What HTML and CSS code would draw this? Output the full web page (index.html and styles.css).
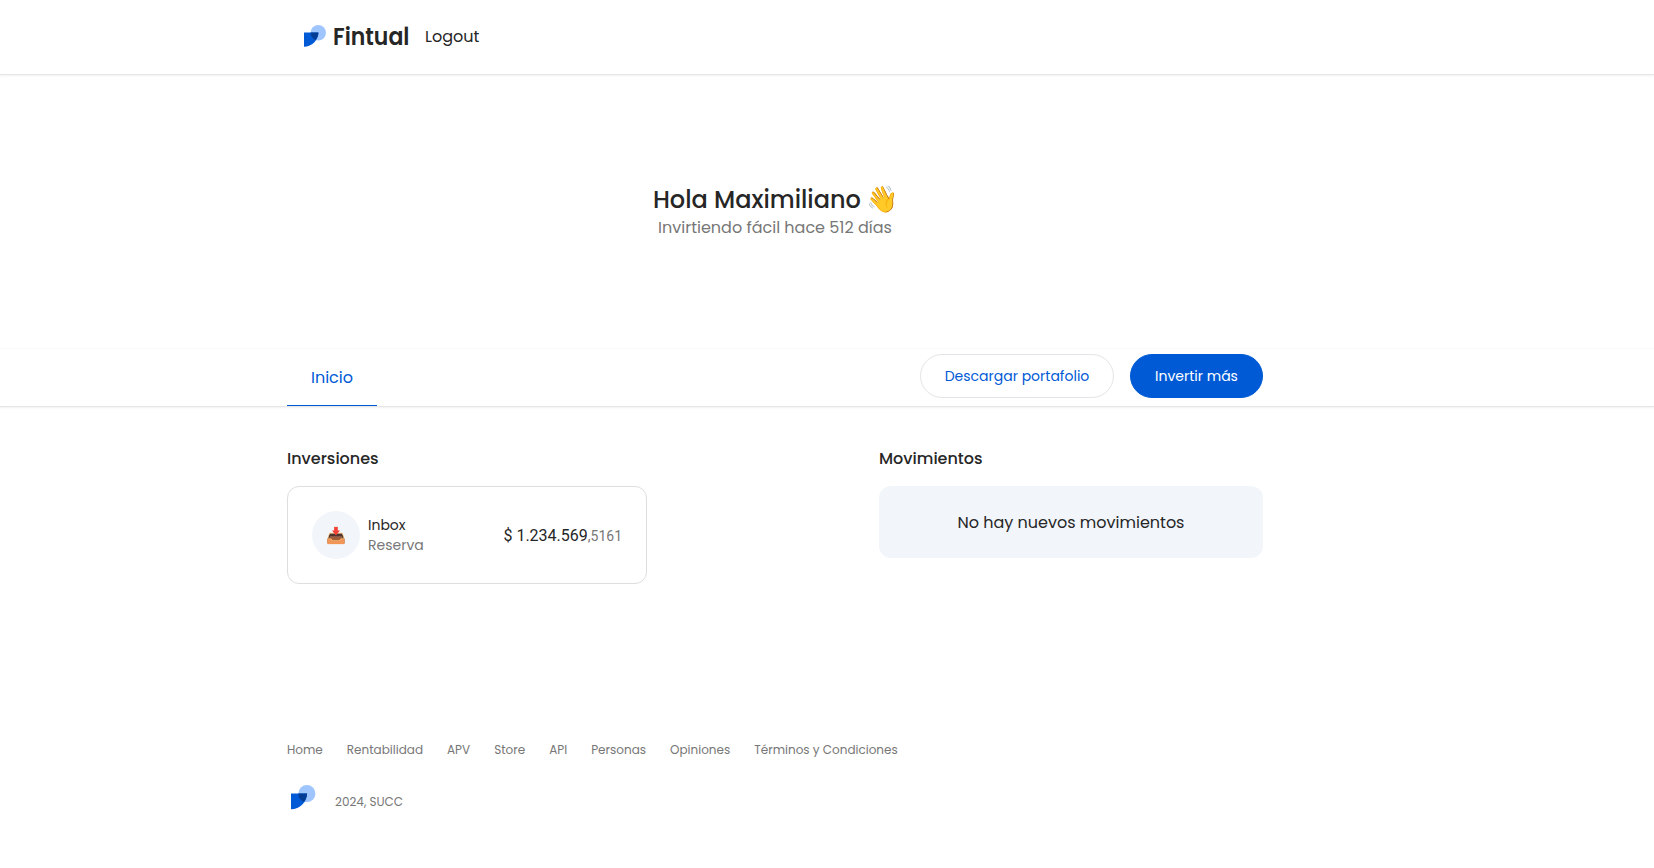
FILE: index.html
```html
<!DOCTYPE html>
<html lang="es">
<head>
<meta charset="utf-8">
<title>Fintual</title>
<link rel="stylesheet" href="styles.css">
</head>
<body>
<header class="header">
  <a class="brand">
    <svg class="brand-mark" viewBox="0 0 25 25"><circle cx="16.2" cy="8.8" r="8.7" fill="#9fc5ff"/><path d="M0 8.6H16.4C16.4 17 9 24.8 0 24.8Z" fill="#005ad6"/><path d="M7.6 8.6H16.4C16.2 12 15.1 14.7 13.3 17C10 16 7.4 13 7.6 8.6Z" fill="#003c94"/></svg>
    <span class="brand-name">Fintual</span>
  </a>
  <a class="logout">Logout</a>
</header>
<section class="hero">
  <h1 class="greeting">Hola Maximiliano <span class="wave">👋</span></h1>
  <p class="since">Invirtiendo fácil hace 512 días</p>
</section>
<nav class="tabs">
  <a class="tab"><span>Inicio</span></a>
  <div class="actions">
    <a class="button button-outline">Descargar portafolio</a>
    <a class="button button-primary">Invertir más</a>
  </div>
</nav>
<main class="content">
  <section class="investments">
    <h2 class="heading">Inversiones</h2>
    <div class="card">
      <span class="card-icon">📥</span>
      <div class="card-text"><span class="card-title">Inbox</span><span class="card-sub">Reserva</span></div>
      <div class="amount">$ 1.234.569<span class="decimals">,5161</span></div>
    </div>
  </section>
  <section class="movements">
    <h2 class="heading">Movimientos</h2>
    <div class="empty">No hay nuevos movimientos</div>
  </section>
</main>
<footer class="footer">
  <div class="links">
    <a>Home</a><a>Rentabilidad</a><a>APV</a><a>Store</a><a>API</a><a>Personas</a><a>Opiniones</a><a>Términos y Condiciones</a>
  </div>
  <div class="legal">
    <svg class="footer-mark" viewBox="0 0 25 25"><circle cx="16.2" cy="8.8" r="8.7" fill="#9fc5ff"/><path d="M0 8.6H16.4C16.4 17 9 24.8 0 24.8Z" fill="#005ad6"/><path d="M7.6 8.6H16.4C16.2 12 15.1 14.7 13.3 17C10 16 7.4 13 7.6 8.6Z" fill="#003c94"/></svg>
    <span class="copyright">2024, SUCC</span>
  </div>
</footer>
</body>
</html>
```
FILE: styles.css
```css
* { box-sizing: border-box; }
body { margin: 0; background: #fff; color: #262626; font-family: Poppins, Inter, "Noto Sans", sans-serif; font-size: 16px; line-height: 24px; white-space: nowrap; }
h1, h2, p { margin: 0; }
.header { height: 75px; padding-left: 304px; display: flex; align-items: center; border-bottom: 1px solid #e6e6e6; box-shadow: 0 1px 2px rgba(0,0,0,.06); }
.brand { display: flex; align-items: center; width: 121px; }
.brand-mark { width: 22px; height: 22px; margin: 0 7px 2px 0; }
.brand-name { font-size: 25px; font-weight: 600; transform: scaleX(.88); transform-origin: left; }
.hero { height: 273px; width: 1550px; padding-top: 108px; text-align: center; }
.greeting { height: 34px; font-size: 24px; font-weight: 500; line-height: 34px; }
.wave { margin: 0 -1px; font-size: 26px; line-height: 1; }
.since { color: #777; line-height: 24px; margin-top: -1px; }
.tabs { height: 59px; padding-left: 287px; display: flex; border-top: 1px solid #fafafa; border-bottom: 1px solid #e6e6e6; box-shadow: 0 1px 2px rgba(0,0,0,.06); }
.tab { width: 90px; height: 57px; padding: 17px 24px 0; color: #005ad6; border-bottom: 1px solid #005ad6; }
.actions { width: 886px; display: flex; justify-content: flex-end; gap: 16px; padding-top: 5px; }
.button { height: 44px; line-height: 42px; border-radius: 22px; text-align: center; font-size: 14px; }
.button-outline { width: 194px; border: 1px solid #e3e5e8; color: #005ad6; }
.button-primary { width: 133px; border: 1px solid #005ad6; background: #005ad6; color: #fff; }
.content { width: 976px; margin-left: 287px; padding-top: 40px; height: 331px; display: flex; justify-content: space-between; }
.heading { font-size: 16px; font-weight: 500; line-height: 24px; margin-bottom: 15px; }
.card { width: 360px; height: 98px; border: 1px solid #dedede; border-radius: 12px; padding: 0 24px; display: flex; align-items: center; }
.card-icon { width: 48px; height: 48px; border-radius: 50%; background: #f2f6fb; font-size: 16px; line-height: 50px; text-align: center; }
.card-text { display: flex; flex-direction: column; margin-left: 8px; font-size: 14px; line-height: 20px; }
.card-sub { color: #777; }
.amount { margin-left: auto; padding-top: 2px; font-family: Roboto, sans-serif; font-size: 16px; }
.decimals { font-size: 14px; color: #777; }
.empty { width: 384px; height: 72px; padding-top: 1px; border-radius: 12px; background: #f2f6fb; line-height: 72px; text-align: center; }
.footer { margin-left: 287px; font-size: 12px; color: #777; }
.links { display: flex; gap: 24px; line-height: 24px; }
.legal { display: flex; align-items: flex-start; padding: 23px 0 0 4px; }
.footer-mark { width: 24.5px; height: 24.5px; margin-right: 19.5px; }
.copyright { padding-top: 5px; }
```
